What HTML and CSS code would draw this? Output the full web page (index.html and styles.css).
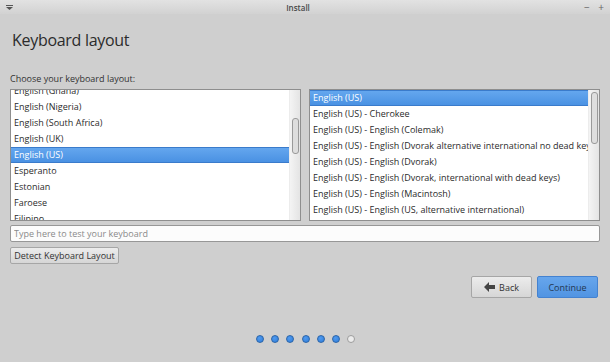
FILE: index.html
```html
<!DOCTYPE html>
<html lang="en">
<head>
  <meta charset="UTF-8" />
  <meta name="viewport" content="width=device-width, initial-scale=1.0" />
  <title>Install</title>
  <link rel="stylesheet" href="styles.css">
</head>
<body>
  <div class="window">
    <div class="titlebar">
      <span class="menu-icon">
        <svg width="7" height="5" viewBox="0 0 7 5"><rect x="0" y="0" width="7" height="1" fill="#555"/><path d="M0 2 H7 L3.5 5 Z" fill="#555"/></svg>
      </span>
      <span class="title">Install</span>
      <span class="win-buttons"><span>&minus;</span><span>+</span></span>
    </div>

    <div class="content">
      <h1>Keyboard layout</h1>
      <div class="prompt">Choose your keyboard layout:</div>

      <div class="lists">
        <div class="listbox">
          <ul class="items scrolled">
            <li>English (Ghana)</li>
            <li>English (Nigeria)</li>
            <li>English (South Africa)</li>
            <li>English (UK)</li>
            <li class="selected">English (US)</li>
            <li>Esperanto</li>
            <li>Estonian</li>
            <li>Faroese</li>
            <li>Filipino</li>
          </ul>
          <div class="scrollbar"><div class="thumb thumb-left"></div></div>
        </div>
        <div class="listbox">
          <ul class="items">
            <li class="selected">English (US)</li>
            <li>English (US) - Cherokee</li>
            <li>English (US) - English (Colemak)</li>
            <li>English (US) - English (Dvorak alternative international no dead keys)</li>
            <li>English (US) - English (Dvorak)</li>
            <li>English (US) - English (Dvorak, international with dead keys)</li>
            <li>English (US) - English (Macintosh)</li>
            <li>English (US) - English (US, alternative international)</li>
            <li>English (US) - English (US, international with dead keys)</li>
          </ul>
          <div class="scrollbar"><div class="thumb thumb-right"></div></div>
        </div>
      </div>

      <input class="test-input" type="text" placeholder="Type here to test your keyboard" />
      <button class="btn detect">Detect Keyboard Layout</button>

      <div class="nav">
        <button class="btn back">
          <svg width="11" height="10" viewBox="0 0 11 10"><path d="M0 5 L5 0 L5 3 L11 3 L11 7 L5 7 L5 10 Z" fill="#444"/></svg>
          Back
        </button>
        <button class="btn continue">Continue</button>
      </div>

      <div class="steps">
        <span class="dot done"></span>
        <span class="dot done"></span>
        <span class="dot done"></span>
        <span class="dot done"></span>
        <span class="dot done"></span>
        <span class="dot done"></span>
        <span class="dot"></span>
      </div>
    </div>
  </div>
</body>
</html>
```

FILE: styles.css
```css
body {
  margin: 0;
  background: #cfcfcf;
  font-family: "Open Sans", "Noto Sans", sans-serif;
  color: #2b2b2b;
}
.window {
  width: 610px;
  height: 362px;
  overflow: hidden;
}
.titlebar {
  height: 14px;
  display: flex;
  align-items: center;
  padding: 0 6px 0 6px;
  background: linear-gradient(#e2e2e2, #d2d2d2);
  font-size: 8px;
  color: #4a4a4a;
}
.menu-icon {
  width: 20px;
  display: flex;
}
.title {
  flex: 1;
  text-align: center;
  font-weight: 600;
  padding-right: 14px;
}
.win-buttons {
  width: 20px;
  display: flex;
  justify-content: space-between;
  font-size: 10px;
  color: #666;
}
.content {
  padding: 0 10px;
}
h1 {
  margin: 0;
  padding: 15px 0 0 2px;
  height: 44px;
  box-sizing: border-box;
  font-size: 16px;
  font-weight: 400;
  color: #2b2b2b;
  letter-spacing: -0.3px;
}
.prompt {
  margin-top: 14px;
  font-size: 9px;
  height: 17px;
  color: #333;
}
.lists {
  display: grid;
  grid-template-columns: 1fr 1fr;
  gap: 8px;
}
.listbox {
  height: 130px;
  border: 1px solid #8e8e8e;
  background: #fff;
  display: flex;
  overflow: hidden;
}
.items {
  flex: 1;
  margin: 0;
  padding: 0;
  list-style: none;
  overflow: hidden;
  font-size: 9px;
  min-width: 0;
}
.items li {
  height: 16px;
  line-height: 16px;
  padding-left: 3px;
  white-space: nowrap;
  color: #2b2b2b;
}
.items.scrolled li:first-child {
  margin-top: -7px;
}
.items li.selected {
  background: linear-gradient(#66a8ef, #4890e2);
  box-shadow: inset 0 1px 0 #3a7bcb, inset 0 -1px 0 #3a7bcb;
  color: #fff;
}
.scrollbar {
  width: 10px;
  background: linear-gradient(90deg, #f4f4f4, #e4e4e4);
  border-left: 1px solid #ececec;
  position: relative;
}
.thumb {
  position: absolute;
  left: 2px;
  width: 5px;
  border: 1px solid #9a9a9a;
  border-radius: 3px;
  background: #dedede;
}
.thumb-left {
  top: 28px;
  height: 34px;
}
.thumb-right {
  top: 2px;
  height: 50px;
}
.test-input {
  display: block;
  box-sizing: border-box;
  width: 100%;
  height: 17px;
  margin-top: 4px;
  padding: 0 3px;
  border: 1px solid #979797;
  border-radius: 2px;
  background: #fcfcfc;
  font-family: inherit;
  font-size: 9px;
  color: #333;
  outline: none;
}
.test-input::placeholder {
  color: #8a8a8a;
}
.btn {
  font-family: inherit;
  font-size: 9px;
  color: #333;
  border: 1px solid #a6a6a6;
  border-radius: 2px;
  background: linear-gradient(#ececec, #d6d6d6);
  padding: 0;
  cursor: pointer;
}
.detect {
  display: block;
  margin-top: 5px;
  width: 109px;
  height: 17px;
}
.nav {
  display: flex;
  justify-content: flex-end;
  gap: 5px;
  margin-top: 12px;
  padding-right: 2px;
}
.nav .btn {
  width: 61px;
  height: 22px;
  display: flex;
  align-items: center;
  justify-content: center;
  gap: 4px;
}
.continue {
  background: linear-gradient(#67a6ec, #5194e2);
  border-color: #4482d0;
  color: #23374f;
}
.steps {
  display: flex;
  justify-content: center;
  gap: 7.3px;
  margin-top: 37px;
  padding-left: 1px;
}
.dot {
  width: 6px;
  height: 6px;
  border-radius: 50%;
  border: 1px solid #9c9c9c;
  background: #ececec;
}
.dot.done {
  background: radial-gradient(circle at 40% 35%, #4f9af0, #2f7dd8);
  border-color: #2b64a8;
}
```
